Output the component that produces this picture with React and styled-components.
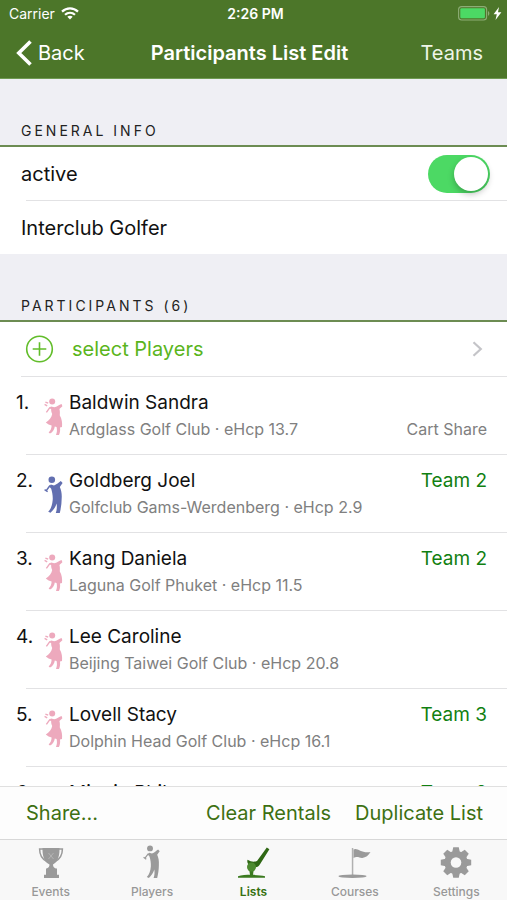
import React, { useState } from 'react';
import styled, { createGlobalStyle } from 'styled-components';

const GlobalStyle = createGlobalStyle`
  * {
    box-sizing: border-box;
  }
  body {
    margin: 0;
    background: #ffffff;
    color: #111111;
    font-family: Inter, 'Liberation Sans', sans-serif;
  }
  button,
  input {
    font: inherit;
  }
`;

const Page = styled.div`
  height: 100vh;
  display: flex;
  flex-direction: column;
`;

const Header = styled.header`
  flex: none;
  background: #4c7629;
  border-bottom: 1px solid #6f9a52;
  color: #ffffff;
`;

const StatusBar = styled.div`
  display: grid;
  grid-template-columns: 1fr auto 1fr;
  align-items: center;
  height: 27px;
  padding: 0 5px 0 9px;
  font-size: 14px;
  > strong {
    font-weight: 600;
  }
`;

const StatusGroup = styled.div`
  display: flex;
  align-items: center;
  gap: ${({ $gap }) => $gap}px;
  justify-content: ${({ $end }) => ($end ? 'flex-end' : 'flex-start')};
`;

const NavBar = styled.nav`
  display: grid;
  grid-template-columns: 1fr auto 1fr;
  align-items: center;
  height: 51px;
  padding: 0 24px 0 16px;
`;

const Title = styled.h1`
  margin: 0;
  font-size: 20px;
  font-weight: 600;
`;

const TextButton = styled.button`
  display: flex;
  align-items: center;
  gap: 6px;
  padding: 0;
  border: 0;
  background: none;
  color: ${({ $color }) => $color};
  font-size: 20px;
  line-height: 24px;
  white-space: nowrap;
  cursor: pointer;
  justify-self: ${({ $end }) => ($end ? 'end' : 'start')};
`;

const Scroller = styled.main`
  flex: 1;
  min-height: 0;
  overflow-y: auto;
  scrollbar-width: none;
`;

const SectionTitle = styled.h2`
  display: flex;
  align-items: flex-end;
  height: 68px;
  margin: 0;
  padding: 0 21px 4px;
  background: #efeff4;
  border-bottom: 2px solid #6c8c52;
  color: #222222;
  font-size: 14px;
  font-weight: 400;
  line-height: 20px;
  letter-spacing: 3px;
`;

const Row = styled.div`
  display: flex;
  align-items: center;
  justify-content: space-between;
  height: 53px;
  padding: 0 17px 0 21px;
  font-size: 20px;
`;

const Divider = styled.hr`
  height: 1px;
  margin: 0 0 0 ${({ $inset }) => $inset}px;
  border: 0;
  background: #e2e2e4;
`;

const Switch = styled.input`
  appearance: none;
  width: 62px;
  height: 38px;
  margin: 0;
  padding: 2px;
  border-radius: 20px;
  background: ${({ checked }) => (checked ? '#4cd964' : '#e5e5ea')};
  cursor: pointer;
  &::before {
    content: '';
    display: block;
    width: 34px;
    height: 34px;
    margin-left: ${({ checked }) => (checked ? 'auto' : '0')};
    border-radius: 50%;
    background: #ffffff;
    box-shadow: 0 3px 6px rgba(0, 0, 0, 0.25);
  }
`;

const SelectRow = styled.button`
  display: flex;
  align-items: center;
  width: 100%;
  height: 54px;
  padding: 0 24px 0 25px;
  border: 0;
  background: none;
  color: #5ab51c;
  font-size: 20px;
  cursor: pointer;
  span {
    flex: 1;
    margin-left: 18px;
    text-align: left;
  }
`;

const PlayerList = styled.ol`
  margin: 0;
  padding: 0;
  list-style: none;
`;

const Player = styled.li`
  display: grid;
  grid-template-columns: 28px 25px 1fr auto;
  height: 77px;
  padding: 13px 20px 0 16px;
  font-size: 19px;
  line-height: 26px;
  > svg {
    margin-top: 8px;
  }
`;

const Club = styled.div`
  color: #808080;
  font-size: 16px;
  line-height: 26px;
`;

const Team = styled.div`
  height: 26px;
  color: #118011;
  text-align: right;
`;

const Toolbar = styled.div`
  flex: none;
  display: flex;
  align-items: center;
  gap: 24px;
  height: 53px;
  padding: 0 24px 0 26px;
  border-top: 1px solid #e0e0e0;
  background: #fdfdfd;
  > button:first-child {
    margin-right: auto;
  }
`;

const TabBar = styled.nav`
  flex: none;
  display: grid;
  grid-template-columns: repeat(5, 1fr);
  height: 61px;
  border-top: 1px solid #d8d8d8;
  background: #f8f8f8;
`;

const Tab = styled.a`
  display: flex;
  flex-direction: column;
  align-items: center;
  padding-top: 5px;
  color: ${({ $active }) => ($active ? '#35700f' : '#989898')};
  font-size: 12px;
  font-weight: ${({ $active }) => ($active ? 600 : 500)};
  line-height: 16px;
  text-decoration: none;
  svg {
    margin-bottom: 5px;
  }
`;

const WifiIcon = () => (
  <svg width="18" height="13" viewBox="0 0 18 13" fill="none" stroke="#fff" strokeWidth="2.2">
    <path d="M1 4.6C5.6.2 12.4.2 17 4.6" />
    <path d="M4 7.8C6.9 5.1 11.1 5.1 14 7.8" />
    <path d="M9 12.6 6.3 9.8C7.8 8.4 10.2 8.4 11.7 9.8Z" fill="#fff" stroke="none" />
  </svg>
);

const BatteryIcon = () => (
  <svg width="32" height="15" viewBox="0 0 32 15">
    <rect x=".6" y=".6" width="28" height="13.4" rx="3" fill="none" stroke="#8dad76" strokeWidth="1.1" />
    <rect x="2.3" y="2.3" width="24.6" height="10" rx="1.2" fill="#4cd964" />
    <path d="M30 5v4.8c1.8-.7 1.8-4.1 0-4.8Z" fill="#8dad76" />
  </svg>
);

const BoltIcon = () => (
  <svg width="9" height="13" viewBox="0 0 9 13" fill="#fff">
    <path d="M6 0 .6 7.3h3.2L2.5 13 8.4 5.2H5Z" />
  </svg>
);

const BackIcon = () => (
  <svg width="16" height="26" viewBox="0 0 16 26" fill="none" stroke="#fff" strokeWidth="3.6">
    <path d="M14.5 1.5 2.8 13l11.7 11.5" />
  </svg>
);

const PlusIcon = () => (
  <svg width="29" height="28" viewBox="0 0 29 28" fill="none" stroke="#62bd2a" strokeWidth="1.6">
    <circle cx="14.5" cy="14" r="12.8" />
    <path d="M14.5 7.2v13.6M7.7 14h13.6" />
  </svg>
);

const ChevronIcon = () => (
  <svg width="11" height="16" viewBox="0 0 11 16" fill="none" stroke="#c4c4c8" strokeWidth="2.2">
    <path d="m1.5 1.2 7.3 6.8-7.3 6.8" />
  </svg>
);

const WomanIcon = () => (
  <svg width="20" height="38" viewBox="0 0 20 38" fill="#eda9bd">
    <circle cx="8.2" cy="3.6" r="3" />
    <path d="M4.2 5.2 1.4 4.2M.6 6.4 3.2 7.8M6 9.4 2.4 14.4" stroke="#eda9bd" strokeWidth="1.4" fill="none" />
    <path d="M7 8.4 10.2 9.2C13 8.8 15 7 17.6 6L18.4 8.2 15.4 11C16.2 13.5 15.8 15.5 15.8 17.500C17.8 20.5 18.5 25 18 29L16 29.500C16.4 32 16 35 15 37H12C13 34.5 13.2 32 12.6 29L10.8 28.500C10.4 31.5 8.5 34.5 6 35.500L4.600 34.500C6.5 32.5 7.6 30.5 7.600 27.500 5.6 27 3.6 26 1.8 24.500 5.2 22.5 7.6 19.5 8.200 16 7.4 14 7 12.5 7.200 11.200L5.200 10Z" />
  </svg>
);

const ManIcon = ({ color, width = 20, height = 38 }) => (
  <svg width={width} height={height} viewBox="0 0 20 38" fill={color}>
    <circle cx="7.800" cy="3.800" r="3.300" />
    <path d="M6 9.500 2 15M.6 13.600 3.600 15.800" stroke={color} strokeWidth="1.400" fill="none" />
    <path d="M6.800 8.600 10 9.400C12.800 8.600 14.500 6.600 16.800 5L18.600 7 15.800 11C17.2 14 18 18 17.700 22 17.7 27 17 32 15.800 37H11.800C13 34 13 30 12.600 27.500 11.5 31.5 9 34.5 6.500 36.800L4.200 35.800C7 33 8.2 29 8.700 24 9 20 8.2 16 7.200 12.800L5.200 10.600Z" />
  </svg>
);

const TrophyIcon = () => (
  <svg width="28" height="34" viewBox="0 0 28 34" fill="#9a9a9a">
    <path d="M5.500 3h17v2c0 7-2.600 12.500-6.500 14.500 0 2 .8 3.300 2.800 4H20v6.200h2v3.300H7v-3.300h2v-6.200h.7c2-.7 2.800-2 2.800-4C8 17.500 5.500 12 5.500 5Z" />
    <path d="M6 4H2.600c0 6.500 3 10.500 7.400 12.600M22 4h3.400c0 6.500-3 10.500-7.400 12.600" fill="none" stroke="#9a9a9a" strokeWidth="1.500" />
    <path d="m11.500 8 5 6m0-6-5 6" fill="none" stroke="#b4b4b4" strokeWidth="1" />
  </svg>
);

const ClubIcon = () => (
  <svg width="34" height="34" viewBox="0 0 34 34" fill="#3b7a1f">
    <path d="M13.300 25h4.400l-.9 6h-2.600Z" />
    <path d="M30.800 2.600 33.400 4.200 24 19.300C22.500 22 20.200 22.800 17.700 21.800 13.200 20.800 10.500 18.500 11.500 14.800 14.800 16.800 18.200 17.200 21 16Z" fill="#2f6714" />
    <circle cx="15.500" cy="22" r="4.500" fill="#4d8a30" />
    <path d="M2 31.200C8.500 29.400 22.500 29.400 29 31.200V32.800H2Z" />
  </svg>
);

const FlagIcon = () => (
  <svg width="34" height="34" viewBox="0 0 34 34" fill="#9a9a9a">
    <path d="M13.800 3h1.500v28h-1.500Z" fill="#b0b0b0" />
    <path d="M15.500 4.500c4-2.500 7 4 17 2.600-2 3.400-5 6-8.600 5.800C21 12.600 19 11 15.500 13Z" />
    <ellipse cx="14.500" cy="31.300" rx="14" ry="1.700" />
  </svg>
);

const GearIcon = () => (
  <svg width="32" height="34" viewBox="0 0 32 34">
    <g fill="#9a9a9a">
      {[0, 45, 90, 135].map((angle) => (
        <path key={angle} d="M13.200 2.300h5.600l1 5v20.400l-1 5h-5.600l-1-5V7.300Z" transform={`rotate(${angle} 16 17.500)`} />
      ))}
      <circle cx="16" cy="17.500" r="11.600" />
    </g>
    <circle cx="16" cy="17.500" r="5.300" fill="#f8f8f8" />
  </svg>
);

const players = [
  { name: 'Baldwin Sandra', club: 'Ardglass Golf Club', hcp: '13.7', woman: true, note: 'Cart Share' },
  { name: 'Goldberg Joel', club: 'Golfclub Gams-Werdenberg', hcp: '2.9', team: 'Team 2' },
  { name: 'Kang Daniela', club: 'Laguna Golf Phuket', hcp: '11.5', woman: true, team: 'Team 2' },
  { name: 'Lee Caroline', club: 'Beijing Taiwei Golf Club', hcp: '20.8', woman: true },
  { name: 'Lovell Stacy', club: 'Dolphin Head Golf Club', hcp: '16.1', woman: true, team: 'Team 3' },
  { name: 'Minnie Phil', team: 'Team 2' },
];

const tabs = [
  { label: 'Events', icon: <TrophyIcon /> },
  { label: 'Players', icon: <ManIcon color="#9a9a9a" width={20} height={34} /> },
  { label: 'Lists', icon: <ClubIcon />, active: true },
  { label: 'Courses', icon: <FlagIcon /> },
  { label: 'Settings', icon: <GearIcon /> },
];

const App = () => {
  const [active, setActive] = useState(true);

  return (
    <Page>
      <GlobalStyle />
      <Header>
        <StatusBar>
          <StatusGroup $gap={6}>
            <span>Carrier</span>
            <WifiIcon />
          </StatusGroup>
          <strong>2:26 PM</strong>
          <StatusGroup $gap={3} $end>
            <BatteryIcon />
            <BoltIcon />
          </StatusGroup>
        </StatusBar>
        <NavBar>
          <TextButton $color="#ffffff">
            <BackIcon />
            Back
          </TextButton>
          <Title>Participants List Edit</Title>
          <TextButton $color="#eef5e8" $end>
            Teams
          </TextButton>
        </NavBar>
      </Header>

      <Scroller>
        <SectionTitle>GENERAL INFO</SectionTitle>
        <Row>
          <label htmlFor="active">active</label>
          <Switch
            id="active"
            type="checkbox"
            role="switch"
            checked={active}
            onChange={(e) => setActive(e.target.checked)}
          />
        </Row>
        <Divider $inset={26} />
        <Row>Interclub Golfer</Row>
        <SectionTitle>PARTICIPANTS (6)</SectionTitle>
        <SelectRow>
          <PlusIcon />
          <span>select Players</span>
          <ChevronIcon />
        </SelectRow>
        <Divider $inset={21} />
        <PlayerList>
          {players.map((player, i) => (
            <React.Fragment key={player.name}>
              {i > 0 && <Divider as="li" $inset={26} />}
              <Player>
                <div>{i + 1}.</div>
                {player.woman ? <WomanIcon /> : <ManIcon color="#626fb0" />}
                <div>
                  <div>{player.name}</div>
                  {player.club && (
                    <Club>
                      {player.club} · eHcp {player.hcp}
                    </Club>
                  )}
                </div>
                <div>
                  <Team>{player.team}</Team>
                  <Club>{player.note}</Club>
                </div>
              </Player>
            </React.Fragment>
          ))}
        </PlayerList>
      </Scroller>

      <Toolbar>
        <TextButton $color="#3d7012">Share...</TextButton>
        <TextButton $color="#3d7012">Clear Rentals</TextButton>
        <TextButton $color="#3d7012">Duplicate List</TextButton>
      </Toolbar>
      <TabBar>
        {tabs.map((tab) => (
          <Tab key={tab.label} href="#" $active={tab.active}>
            {tab.icon}
            {tab.label}
          </Tab>
        ))}
      </TabBar>
    </Page>
  );
};

export default App;
